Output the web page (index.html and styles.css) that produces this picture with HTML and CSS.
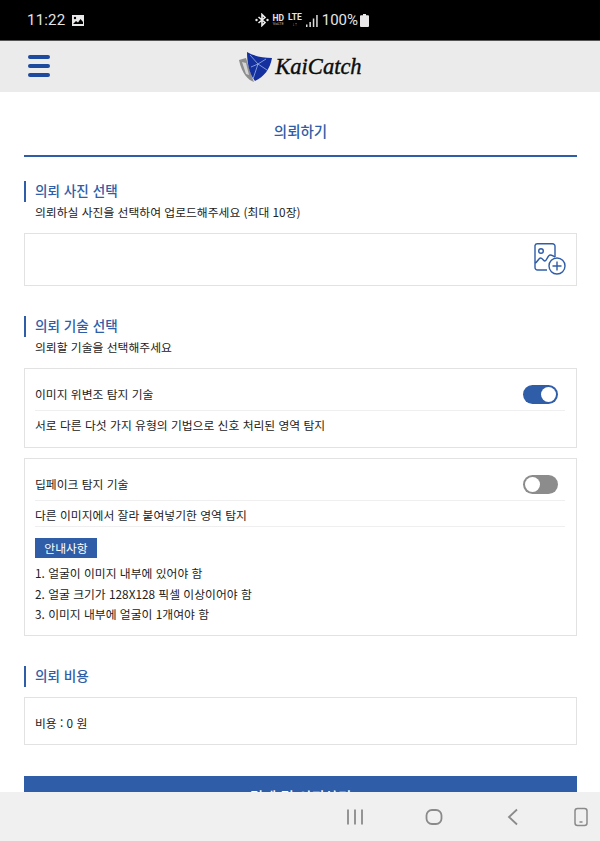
FILE: index.html
```html
<!DOCTYPE html>
<html lang="ko">
<head>
<meta charset="utf-8">
<title>의뢰하기</title>
<link rel="stylesheet" href="styles.css">
</head>
<body>
<div class="status">
  <div class="status-left">
    <span class="clock">11:22</span>
    <svg class="pic" viewBox="0 0 12 11"><path fill="#e8e8e8" d="M0 0h12v11H0z"/><circle cx="3" cy="3" r="1.2" fill="#000"/><path d="M1 9l3-3 2 1.500L8.500 4 11 7v2z" fill="#000"/></svg>
  </div>
  <div class="status-right">
    <svg class="bt" viewBox="0 0 14 14"><path d="M3.500 4l6.500 5.500L7 12.500v-11L10 4.500 3.500 10" fill="none" stroke="#eee" stroke-width="1.600"/><circle cx="1.500" cy="7" r="1.200" fill="#eee"/><circle cx="12.500" cy="7" r="1.200" fill="#eee"/></svg>
    <span class="hd"><b>HD</b><i>VoLTE</i></span>
    <span class="lte"><b>LTE</b><i>↓↑</i></span>
    <svg class="signal" viewBox="0 0 12 12"><path fill="#ddd" d="M0 9.500h1.500V12H0zM3.400 7h1.500v5H3.400z"/><path fill="#ddd" d="M6.800 3.500h1.500V12H6.800zM10.200 0h1.500v12h-1.500z"/></svg>
    <span class="pct">100%</span>
    <svg class="batt" viewBox="0 0 9 13"><path fill="#e8e8e8" d="M3 0h3v1.200h2a1 1 0 0 1 1 1V12a1 1 0 0 1-1 1H1a1 1 0 0 1-1-1V2.200a1 1 0 0 1 1-1h2z"/></svg>
  </div>
</div>

<header class="topbar">
  <div class="burger"><span></span><span></span><span></span></div>
  <div class="logo">
    <svg class="shield" viewBox="0 0 34 32">
      <path d="M0 9l7-2 6 19 2 5C9 29 3 23 0 9z" fill="#8d8d8d"/>
      <path d="M3 11l4 1 3 12-3-1z" fill="#d4d4d4"/>
      <path d="M8 1c7 4 15 6 25 6-2 11-8 19-17 23C11 24 8 13 8 1z" fill="#14309f"/>
      <path d="M11 4l8 9 8-5M19 13l-5 15M19 13l9 6M12 16l7-3" fill="none" stroke="#a9c4ee" stroke-width=".7"/>
    </svg>
    <span class="wordmark">KaiCatch</span>
  </div>
</header>

<main class="page">
  <h1 class="title">의뢰하기</h1>

  <section class="sec sec-photo">
    <h2 class="sec-head">의뢰 사진 선택</h2>
    <p class="sec-sub">의뢰하실 사진을 선택하여 업로드해주세요 (최대 10장)</p>
    <div class="box upload">
      <svg class="add" viewBox="0 0 32 32" fill="none" stroke="#2f5da8" stroke-width="1.400">
        <path d="M13 27H3.500A2.500 2.500 0 0 1 1 24.500v-22A2.500 2.500 0 0 1 3.500 0.700h15A2.500 2.500 0 0 1 21 3.200V14"/>
        <circle cx="7" cy="8" r="2.300"/>
        <path d="M1 20c3-1 3.500-5 5.500-5s3 3 4.500 3 3-6 5-6 3 1 5 2"/>
        <circle cx="23" cy="23" r="8"/>
        <path d="M23 18.500v9M18.500 23h9"/>
      </svg>
    </div>
  </section>

  <section class="sec sec-tech">
    <h2 class="sec-head">의뢰 기술 선택</h2>
    <p class="sec-sub">의뢰할 기술을 선택해주세요</p>
    <div class="box card card-one">
      <div class="row row-top"><span class="row-label">이미지 위변조 탐지 기술</span><span class="toggle on"></span></div>
      <div class="row row-desc">서로 다른 다섯 가지 유형의 기법으로 신호 처리된 영역 탐지</div>
    </div>
    <div class="box card card-two">
      <div class="row row-top"><span class="row-label">딥페이크 탐지 기술</span><span class="toggle"></span></div>
      <div class="row row-desc row-line">다른 이미지에서 잘라 붙여넣기한 영역 탐지</div>
      <span class="notice">안내사항</span>
      <ol class="rules">
        <li>1. 얼굴이 이미지 내부에 있어야 함</li>
        <li>2. 얼굴 크기가 128X128 픽셀 이상이어야 함</li>
        <li>3. 이미지 내부에 얼굴이 1개여야 함</li>
      </ol>
    </div>
  </section>

  <section class="sec sec-cost">
    <h2 class="sec-head">의뢰 비용</h2>
    <div class="box cost">비용 : 0 원</div>
  </section>

  <button class="submit" type="button">결제 및 의뢰하기</button>
</main>

<nav class="softkeys">
  <svg class="key" viewBox="0 0 24 24"><path d="M5 4.500v15M12 4.500v15M19 4.500v15" stroke="#8a8a8a" stroke-width="1.800" fill="none"/></svg>
  <svg class="key" viewBox="0 0 24 24"><rect x="4.500" y="5" width="15" height="14" rx="5.500" stroke="#8a8a8a" stroke-width="1.800" fill="none"/></svg>
  <svg class="key" viewBox="0 0 24 24"><path d="M16 4.500L8 12l8 7.500" stroke="#8a8a8a" stroke-width="1.800" fill="none"/></svg>
  <svg class="key key-last" viewBox="0 0 24 24"><rect x="6" y="3.500" width="12" height="17" rx="2.500" stroke="#8a8a8a" stroke-width="1.500" fill="none"/><path d="M10.500 17h3" stroke="#8a8a8a" stroke-width="1.500"/></svg>
</nav>
</body>
</html>
```
FILE: styles.css
```css
* { box-sizing: border-box; }
html, body { margin: 0; padding: 0; height: 841px; overflow: hidden; }
body {
  position: relative;
  width: 600px;
  background: #fff;
  color: #222;
  font-family: "Noto Sans CJK KR", "Noto Sans", sans-serif;
  font-size: 11.8px;
}
.status {
  height: 41px;
  background: #000;
  border-bottom: 1px solid #555;
  display: flex;
  align-items: center;
  justify-content: space-between;
  padding: 0 231px 0 27px;
  color: #e4e4e4;
  font-family: Roboto, sans-serif;
}
.status-left, .status-right { display: flex; align-items: center; }
.clock { font-size: 15px; letter-spacing: .2px; }
.pic { width: 12px; height: 11px; margin-left: 7px; }
.bt { width: 14px; height: 14px; margin-right: 3px; }
.hd, .lte { display: flex; flex-direction: column; align-items: center; line-height: 1; }
.hd { margin-right: 4px; }
.hd b, .lte b { font-size: 8.500px; font-weight: 700; }
.hd i { font-size: 4px; font-style: normal; color: #bbb; }
.lte i { font-size: 5px; font-style: normal; color: #999; }
.signal { width: 12px; height: 12px; margin: 2px 0 0 4px; }
.pct { font-size: 15px; margin-left: 4px; }
.batt { width: 9px; height: 13px; margin-left: 2px; }

.topbar {
  height: 51px;
  background: #ebebeb;
  position: relative;
  display: flex;
  align-items: center;
  justify-content: center;
  padding-left: 1px;
}
.burger {
  position: absolute;
  left: 28px;
  top: 14px;
  width: 22px;
  display: flex;
  flex-direction: column;
  gap: 5px;
}
.burger span { height: 4px; border-radius: 2px; background: #1d4a9e; }
.logo { display: flex; align-items: center; }
.shield { width: 34px; height: 32px; margin-top: 1px; }
.wordmark {
  font-family: "Liberation Serif", serif;
  font-style: italic;
  font-size: 22.500px;
  color: #0c0c0c;
  margin-left: 2px;
  -webkit-text-stroke: .4px #0c0c0c;
}

.page { padding: 0 23px 0 24px; }
.title {
  margin: 0;
  height: 65px;
  border-bottom: 2px solid #2f5da8;
  color: #2f5da8;
  font-size: 14.500px;
  font-weight: 500;
  line-height: 78px;
  text-align: center;
}
.sec-head {
  margin: 0;
  height: 21px;
  border-left: 2px solid #2f5da8;
  padding-left: 9px;
  color: #2f5da8;
  font-size: 13.600px;
  font-weight: 500;
  line-height: 19px;
}
.sec-sub {
  margin: 0;
  padding-left: 11px;
  line-height: 20px;
  height: 21px;
}
.box { border: 1px solid #e2e2e2; background: #fff; }
.sec-photo { margin-top: 24px; }
.upload {
  margin-top: 10px;
  height: 53px;
  display: flex;
  justify-content: flex-end;
  align-items: flex-start;
  padding: 9px 10px 0 0;
}
.add { width: 32px; height: 32px; }
.sec-tech { margin-top: 30px; }
.card { padding: 0 11px 0 10px; }
.card-one { margin-top: 10px; height: 80px; }
.card-two { margin-top: 10px; height: 178px; }
.row { display: flex; align-items: center; justify-content: space-between; }
.row-top { height: 42px; padding-top: 10px; border-bottom: 1px solid #efefef; padding-right: 7px; }
.row-label { margin-top: -2px; }
.row-desc { height: 30px; padding-bottom: 3px; }
.row-line { height: 26px; padding: 2px 0 0; border-bottom: 1px solid #efefef; }
.toggle {
  position: relative;
  width: 35px;
  height: 19px;
  border-radius: 10px;
  background: #8c8c8c;
}
.toggle::after {
  content: "";
  position: absolute;
  left: 2px;
  top: 2px;
  width: 15px;
  height: 15px;
  border-radius: 50%;
  background: #fff;
}
.toggle.on { background: #2f5da8; }
.toggle.on::after { left: 18px; }
.notice {
  display: block;
  width: 62px;
  height: 20px;
  margin-top: 11px;
  background: #2f5da8;
  color: #fff;
  text-align: center;
  line-height: 20px;
}
.rules { list-style: none; margin: 4px 0 0; padding: 0; }
.rules li { height: 20.500px; line-height: 21px; }
.sec-cost { margin-top: 30px; }
.cost {
  margin-top: 10px;
  height: 48px;
  padding: 0 10px;
  line-height: 49px;
}
.submit {
  display: block;
  width: 100%;
  height: 40px;
  margin-top: 31px;
  border: 0;
  background: #2f5da8;
  color: #fff;
  font: 500 14.500px "Noto Sans CJK KR", sans-serif;
}
.softkeys {
  position: absolute;
  left: 0;
  right: 0;
  bottom: 0;
  height: 49px;
  background: #f0f0f0;
  display: flex;
  align-items: center;
  padding-left: 343px;
  gap: 55px;
}
.key { width: 24px; height: 24px; flex: none; }
.key-last { margin-left: -11px; }
```
